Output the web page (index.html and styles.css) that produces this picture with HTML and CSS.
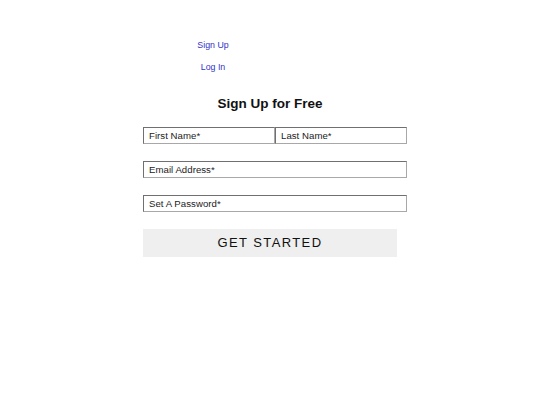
FILE: index.html
```html
<!DOCTYPE html>
<html lang="en">
<head>
<meta charset="utf-8">
<title>Sign Up</title>
<link rel="stylesheet" href="styles.css">
</head>
<body>
<div class="page">
  <nav class="nav">
    <a href="#" class="nav-link">Sign Up</a>
    <a href="#" class="nav-link">Log In</a>
  </nav>
  <h1 class="title">Sign Up for Free</h1>
  <form class="form">
    <div class="row">
      <input class="field half" type="text" placeholder="First Name*">
      <input class="field half" type="text" placeholder="Last Name*">
    </div>
    <div class="row">
      <input class="field" type="email" placeholder="Email Address*">
    </div>
    <div class="row">
      <input class="field" type="password" placeholder="Set A Password*">
    </div>
    <button class="submit" type="button">GET STARTED</button>
  </form>
</div>
</body>
</html>
```

FILE: styles.css
```css
html, body {
  margin: 0;
  padding: 0;
  background: #ffffff;
}
body {
  font-family: "Liberation Sans", Arial, sans-serif;
  color: #111;
}
.page {
  margin-left: 143px;
  padding-top: 40px;
}
.nav {
  width: 140px;
  display: flex;
  flex-direction: column;
  align-items: center;
  gap: 11px;
}
.nav-link {
  font-size: 8.8px;
  line-height: 11px;
  color: #3232c8;
  text-decoration: none;
}
.title {
  width: 254px;
  margin: 23px 0 0;
  text-align: center;
  font-size: 13.5px;
  line-height: 16px;
  font-weight: bold;
  color: #111;
}
.form {
  margin-top: 15px;
  display: flex;
  flex-direction: column;
}
.row {
  display: flex;
  width: 264px;
  margin-bottom: 16.5px;
}
.field {
  box-sizing: border-box;
  width: 264px;
  height: 17.25px;
  margin: 0;
  padding: 0 5px;
  border: 1.5px solid #767676;
  border-top-color: #707070;
  border-left-color: #707070;
  border-bottom-color: #a8a8a8;
  border-right-color: #a8a8a8;
  font-family: "Liberation Sans", Arial, sans-serif;
  font-size: 9.6px;
  letter-spacing: 0.05px;
  color: #111;
  background: #fff;
}
.field.half {
  width: 132px;
}
.field::placeholder {
  color: #222;
  opacity: 1;
}
.submit {
  width: 254px;
  height: 28px;
  margin: 0.5px 0 0;
  padding: 0;
  border: none;
  background: #efefef;
  font-family: "Liberation Sans", Arial, sans-serif;
  font-size: 13px;
  letter-spacing: 1.4px;
  color: #111;
}
```
